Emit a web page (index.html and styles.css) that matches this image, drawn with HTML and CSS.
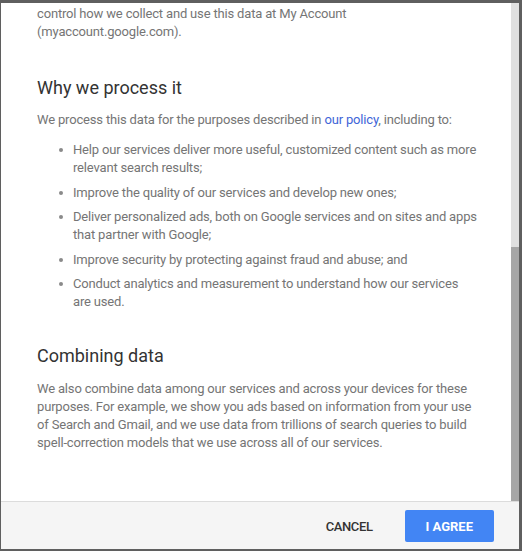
FILE: index.html
```html
<!DOCTYPE html>
<html lang="en">
<head>
<meta charset="utf-8">
<title>Privacy and Terms</title>
<link rel="stylesheet" href="styles.css">
</head>
<body>
<div class="dialog">
  <div class="body-row">
    <div class="content">
      <p class="text intro">control how we collect and use this data at My Account (myaccount.google.com).</p>
      <h2 class="heading first">Why we process it</h2>
      <p class="text">We process this data for the purposes described in <a class="link" href="#">our policy</a>, including to:</p>
      <ul class="list">
        <li class="item">Help our services deliver more useful, customized content such as more relevant search results;</li>
        <li class="item">Improve the quality of our services and develop new ones;</li>
        <li class="item">Deliver personalized ads, both on Google services and on sites and apps that partner with Google;</li>
        <li class="item">Improve security by protecting against fraud and abuse; and</li>
        <li class="item">Conduct analytics and measurement to understand how our services are used.</li>
      </ul>
      <h2 class="heading second">Combining data</h2>
      <p class="text last">We also combine data among our services and across your devices for these purposes. For example, we show you ads based on information from your use of Search and Gmail, and we use data from trillions of search queries to build spell-correction models that we use across all of our services.</p>
    </div>
    <div class="scrollbar">
      <div class="track"></div>
      <div class="thumb"></div>
    </div>
  </div>
  <div class="footer">
    <button class="btn cancel" type="button">Cancel</button>
    <button class="btn agree" type="button">I agree</button>
  </div>
</div>
</body>
</html>
```
FILE: styles.css
```css
html, body {
  margin: 0;
  padding: 0;
}
body {
  background: #5f5f5f;
  width: 522px;
  height: 551px;
  overflow: hidden;
  font-family: Roboto, "Liberation Sans", Arial, sans-serif;
}
.dialog {
  margin: 3px 0 0 1px;
  width: 518px;
  height: 546px;
  background: #fff;
  display: flex;
  flex-direction: column;
}
.body-row {
  flex: 1;
  display: flex;
  min-height: 0;
  overflow: hidden;
}
.content {
  flex: 1;
  padding: 2px 33px 0 36px;
  min-width: 0;
}
.text {
  margin: 0;
  font-size: 13px;
  line-height: 18px;
  letter-spacing: -0.17px;
  color: #757575;
}
.intro {
  margin-bottom: 35px;
}
.heading {
  margin: 0 0 11px;
  font-size: 18px;
  line-height: 24px;
  font-weight: 400;
  color: #333;
}
.heading.second {
  margin-top: 33px;
  margin-bottom: 12px;
}
.link {
  color: #3f66d8;
  text-decoration: none;
}
.list {
  list-style: none;
  margin: 12px 0 0;
  padding: 0 0 0 22px;
}
.item {
  display: grid;
  grid-template-columns: 14px 1fr;
  font-size: 13px;
  line-height: 18px;
  letter-spacing: -0.17px;
  color: #757575;
  margin-bottom: 6.5px;
}
.item:last-child {
  margin-bottom: 0;
}
.item::before {
  content: "";
  width: 4px;
  height: 4px;
  margin-top: 7px;
  border-radius: 50%;
  background: #8a8a8a;
}
.scrollbar {
  width: 8px;
  display: flex;
  flex-direction: column;
}
.track {
  flex: 1;
  background: #e0e0e0;
}
.thumb {
  height: 254px;
  background: #a6a6a6;
}
.footer {
  border-top: 1px solid #dcdcdc;
  background: #f5f5f5;
  display: flex;
  align-items: flex-start;
  justify-content: flex-end;
  padding: 8px 25px 0 0;
  box-sizing: border-box;
  height: 48px;
  gap: 16px;
}
.btn {
  height: 32px;
  border: 0;
  border-radius: 2px;
  font-family: Roboto, "Liberation Sans", Arial, sans-serif;
  font-size: 13px;
  text-transform: uppercase;
  cursor: pointer;
  padding: 0 16px;
}
.cancel {
  background: transparent;
  color: #333;
  font-weight: 500;
  letter-spacing: -0.4px;
}
.agree {
  background: #4285f4;
  color: #fff;
  font-weight: 700;
  padding: 0 21px;
}
```
